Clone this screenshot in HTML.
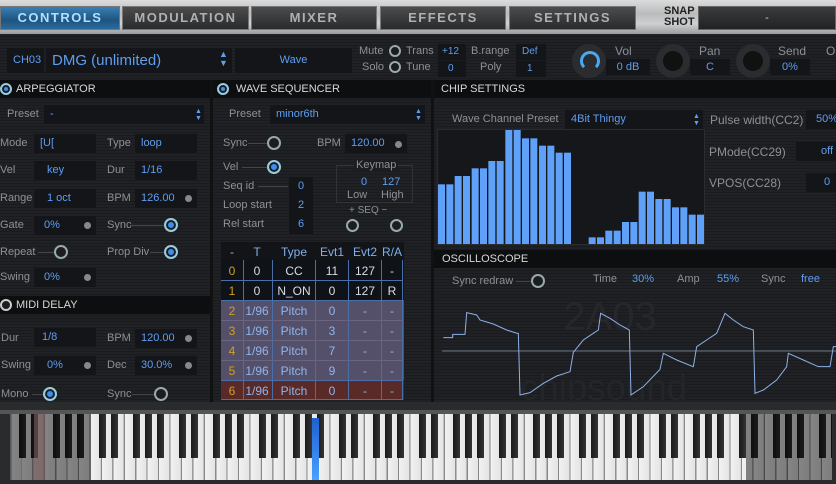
<!DOCTYPE html>
<html><head><meta charset="utf-8"><style>
*{margin:0;padding:0;box-sizing:border-box}
body{width:836px;height:484px;overflow:hidden;background:#1d1f22;font-family:"Liberation Sans",sans-serif;font-size:11px;color:#8c9197;position:relative}
.scan{left:0;top:34px;width:836px;height:376px;background:repeating-linear-gradient(#1f2124 0,#1f2124 2px,#191b1e 2px,#191b1e 3px)}
.a{position:absolute;white-space:nowrap}
.top{left:0;top:0;width:836px;height:34px;background:linear-gradient(#dcdcdc,#b9bbbd 40%,#cfd0d1 70%,#9a9c9e)}
.tab{top:6px;height:24px;background:linear-gradient(#4a4c4e,#2a2b2d);border:1px solid #777;color:#b0b0b0;font-size:13px;letter-spacing:1.5px;text-align:center;line-height:22px;font-weight:bold}
.tab.on{background:linear-gradient(#3a7fb5,#1f5480 60%,#2a6b9c);color:#aee0ff}
.hdr{height:18px;background:#0d0e10;color:#d8d8d8;font-size:11px;line-height:18px}
.bx{background:#131518;height:19px;line-height:19px;color:#5f9ef2;padding-left:6px}
.v{color:#5f9ef2}
.lb{color:#8c9197}
.kn{width:14px;height:14px;border-radius:50%;border:2px solid #9aa;background:#1b1d20}
.kn.b{border-color:#9cd;background:#3c8ff0;box-shadow:inset 0 0 0 2px #1b1d20}
.dot{width:7px;height:7px;border-radius:50%;background:#888}
.line{height:1px;background:#444}
</style></head><body>
<div class="a top"></div>
<div class="a scan"></div>
<div class="a tab on" style="left:0;width:120px">CONTROLS</div>
<div class="a tab" style="left:122px;width:127px">MODULATION</div>
<div class="a tab" style="left:251px;width:126px">MIXER</div>
<div class="a tab" style="left:380px;width:126px">EFFECTS</div>
<div class="a tab" style="left:509px;width:127px">SETTINGS</div>
<div class="a" style="left:664px;top:6px;color:#222;font-weight:bold;font-size:11px;line-height:11px;text-align:center">SNAP<br>SHOT</div>
<div class="a" style="left:698px;top:6px;width:138px;height:24px;background:linear-gradient(#3a3c3e,#222);border:1px solid #666;color:#ccc;text-align:center;line-height:22px">-</div>

<div class="a bx" style="left:7px;top:48px;width:37px;height:25px;line-height:25px;font-size:11px">CH03</div>
<div class="a bx" style="left:46px;top:48px;width:186px;height:25px;line-height:25px;font-size:15px">DMG (unlimited)</div>
<div class="a" style="left:219px;top:50px;color:#5f9ef2;font-size:9px;line-height:9px">▲<br>▼</div>
<div class="a bx" style="left:235px;top:48px;width:117px;height:25px;line-height:25px;text-align:center;padding:0">Wave</div>
<div class="a lb" style="left:359px;top:45px">Mute</div><div class="a kn" style="left:389px;top:45px;width:12px;height:12px"></div><div class="a lb" style="left:406px;top:45px">Trans</div>
<div class="a lb" style="left:362px;top:61px">Solo</div><div class="a kn" style="left:389px;top:61px;width:12px;height:12px"></div><div class="a lb" style="left:406px;top:61px">Tune</div>
<div class="a bx" style="left:438px;top:44px;width:28px;height:16px;line-height:16px;font-size:10px;padding-left:4px">+12</div>
<div class="a bx" style="left:438px;top:61px;width:28px;height:16px;line-height:16px;font-size:10px;padding-left:10px">0</div>
<div class="a lb" style="left:471px;top:45px">B.range</div><div class="a lb" style="left:480px;top:61px">Poly</div>
<div class="a bx" style="left:516px;top:44px;width:30px;height:16px;line-height:16px;font-size:10px;padding-left:6px">Def</div>
<div class="a bx" style="left:516px;top:61px;width:30px;height:16px;line-height:16px;font-size:10px;padding-left:11px">1</div>
<div class="a" style="left:572px;top:44px;width:34px;height:34px;border-radius:50%;background:#2a2c2f"></div>
<div class="a" style="left:580px;top:51px;width:20px;height:20px;border-radius:50%;border:3px solid #4aa8f0;border-bottom-color:transparent"></div>
<div class="a lb" style="left:615px;top:44px;font-size:12px">Vol</div>
<div class="a bx" style="left:606px;top:59px;width:44px;height:16px;line-height:16px;text-align:center;padding:0">0 dB</div>
<div class="a" style="left:656px;top:44px;width:34px;height:34px;border-radius:50%;background:#2a2c2f"></div>
<div class="a" style="left:663px;top:51px;width:20px;height:20px;border-radius:50%;background:#111"></div>
<div class="a lb" style="left:699px;top:44px;font-size:12px">Pan</div>
<div class="a bx" style="left:690px;top:59px;width:40px;height:16px;line-height:16px;text-align:center;padding:0">C</div>
<div class="a" style="left:736px;top:44px;width:34px;height:34px;border-radius:50%;background:#2a2c2f"></div>
<div class="a" style="left:743px;top:51px;width:20px;height:20px;border-radius:50%;background:#111"></div>
<div class="a lb" style="left:778px;top:44px;font-size:12px">Send</div>
<div class="a bx" style="left:770px;top:59px;width:40px;height:16px;line-height:16px;text-align:center;padding:0">0%</div>
<div class="a lb" style="left:826px;top:44px;font-size:12px">O</div>

<div class="a hdr" style="left:0;top:80px;width:210px;padding-left:16px">ARPEGGIATOR</div>
<div class="a kn b" style="left:0;top:83px;width:12px;height:12px"></div>
<div class="a hdr" style="left:213px;top:80px;width:219px;padding-left:23px">WAVE SEQUENCER</div>
<div class="a kn b" style="left:217px;top:83px;width:12px;height:12px"></div>
<div class="a hdr" style="left:434px;top:80px;width:402px;padding-left:7px">CHIP SETTINGS</div>
<div class="a" style="left:210px;top:80px;width:3px;height:330px;background:#111"></div>
<div class="a" style="left:431px;top:80px;width:3px;height:330px;background:#111"></div>

<div class="a lb" style="left:7px;top:108px">Preset</div>
<div class="a bx" style="left:44px;top:105px;width:160px">-</div>
<div class="a" style="left:195px;top:108px;color:#5f9ef2;font-size:7px;line-height:7px">▲<br>▼</div>
<div class="a lb" style="left:0;top:137px">Mode</div><div class="a bx" style="left:34px;top:134px;width:62px">[U[</div>
<div class="a lb" style="left:107px;top:137px">Type</div><div class="a bx" style="left:135px;top:134px;width:62px">loop</div>
<div class="a lb" style="left:0;top:164px">Vel</div><div class="a bx" style="left:34px;top:161px;width:62px;padding-left:13px">key</div>
<div class="a lb" style="left:107px;top:164px">Dur</div><div class="a bx" style="left:135px;top:161px;width:62px">1/16</div>
<div class="a lb" style="left:0;top:192px">Range</div><div class="a bx" style="left:34px;top:189px;width:62px;padding-left:13px">1 oct</div>
<div class="a lb" style="left:107px;top:192px">BPM</div><div class="a bx" style="left:135px;top:189px;width:62px">126.00</div><div class="a dot" style="left:185px;top:195px"></div>
<div class="a lb" style="left:0;top:219px">Gate</div><div class="a bx" style="left:34px;top:216px;width:62px;padding-left:10px">0%</div><div class="a dot" style="left:84px;top:222px"></div>
<div class="a lb" style="left:107px;top:219px">Sync</div><div class="a line" style="left:130px;top:225px;width:35px"></div><div class="a kn b" style="left:164px;top:218px"></div>
<div class="a lb" style="left:0;top:246px">Repeat</div><div class="a line" style="left:38px;top:252px;width:18px"></div><div class="a kn" style="left:54px;top:245px"></div>
<div class="a lb" style="left:107px;top:246px">Prop Div</div><div class="a line" style="left:150px;top:252px;width:15px"></div><div class="a kn b" style="left:164px;top:245px"></div>
<div class="a lb" style="left:0;top:271px">Swing</div><div class="a bx" style="left:34px;top:268px;width:62px;padding-left:10px">0%</div><div class="a dot" style="left:84px;top:274px"></div>
<div class="a hdr" style="left:0;top:296px;width:210px;padding-left:16px">MIDI DELAY</div>
<div class="a kn" style="left:0;top:299px;width:12px;height:12px;border-color:#ccc"></div>
<div class="a lb" style="left:1px;top:332px">Dur</div><div class="a bx" style="left:34px;top:328px;width:62px;padding-left:8px">1/8</div>
<div class="a lb" style="left:107px;top:332px">BPM</div><div class="a bx" style="left:135px;top:329px;width:62px">120.00</div><div class="a dot" style="left:185px;top:335px"></div>
<div class="a lb" style="left:1px;top:359px">Swing</div><div class="a bx" style="left:34px;top:356px;width:62px;padding-left:13px">0%</div><div class="a dot" style="left:84px;top:362px"></div>
<div class="a lb" style="left:107px;top:359px">Dec</div><div class="a bx" style="left:135px;top:356px;width:62px">30.0%</div><div class="a dot" style="left:185px;top:362px"></div>
<div class="a lb" style="left:1px;top:388px">Mono</div><div class="a line" style="left:32px;top:394px;width:12px"></div><div class="a kn b" style="left:43px;top:387px"></div>
<div class="a lb" style="left:107px;top:388px">Sync</div><div class="a line" style="left:132px;top:394px;width:22px"></div><div class="a kn" style="left:154px;top:387px"></div>

<div class="a lb" style="left:229px;top:108px">Preset</div>
<div class="a bx" style="left:270px;top:105px;width:155px">minor6th</div>
<div class="a" style="left:415px;top:108px;color:#5f9ef2;font-size:7px;line-height:7px">▲<br>▼</div>
<div class="a lb" style="left:223px;top:137px">Sync</div><div class="a line" style="left:248px;top:143px;width:20px"></div><div class="a kn" style="left:267px;top:136px"></div>
<div class="a lb" style="left:317px;top:137px">BPM</div><div class="a bx" style="left:345px;top:134px;width:62px">120.00</div><div class="a dot" style="left:395px;top:141px"></div>
<div class="a lb" style="left:223px;top:161px">Vel</div><div class="a line" style="left:242px;top:167px;width:26px"></div><div class="a kn b" style="left:267px;top:160px"></div>
<div class="a lb" style="left:223px;top:180px">Seq id</div><div class="a line" style="left:258px;top:186px;width:30px"></div><div class="a bx" style="left:289px;top:177px;width:24px;padding-left:9px">0</div>
<div class="a lb" style="left:223px;top:199px">Loop start</div><div class="a bx" style="left:289px;top:196px;width:24px;padding-left:9px">2</div>
<div class="a lb" style="left:223px;top:218px">Rel start</div><div class="a bx" style="left:289px;top:215px;width:24px;padding-left:9px">6</div>
<div class="a" style="left:336px;top:165px;width:77px;height:38px;border:1px solid #333"></div>
<div class="a lb" style="left:354px;top:159px;background:#1b1d20;padding:0 2px">Keymap</div>
<div class="a v" style="left:361px;top:176px">0</div><div class="a v" style="left:382px;top:176px">127</div>
<div class="a lb" style="left:347px;top:189px">Low</div><div class="a lb" style="left:381px;top:189px">High</div>
<div class="a lb" style="left:349px;top:205px;font-size:10px">+ SEQ −</div>
<div class="a kn" style="left:346px;top:219px;width:13px;height:13px"></div><div class="a kn" style="left:390px;top:219px;width:13px;height:13px"></div>

<svg class="a" style="left:221px;top:242px" width="183" height="160" viewBox="221 242 183 160">
<rect x="221" y="242" width="183" height="18" fill="#121417"/>
<rect x="221" y="260" width="183" height="40" fill="#0f1216"/>
<rect x="221" y="300" width="183" height="80" fill="#55506a"/>
<rect x="221" y="380" width="183" height="20" fill="#5a2a28"/>
<g stroke="#4a6fa8" stroke-width="1">
<line x1="243.5" y1="260" x2="243.5" y2="400"/><line x1="272.5" y1="260" x2="272.5" y2="400"/><line x1="315.5" y1="260" x2="315.5" y2="400"/><line x1="348.5" y1="260" x2="348.5" y2="400"/><line x1="381.5" y1="260" x2="381.5" y2="400"/><line x1="402.5" y1="260" x2="402.5" y2="400"/>
<line x1="221" y1="280.5" x2="403" y2="280.5"/><line x1="221" y1="300.5" x2="403" y2="300.5"/><line x1="221" y1="320.5" x2="403" y2="320.5" stroke="#6a6480"/><line x1="221" y1="340.5" x2="403" y2="340.5" stroke="#6a6480"/><line x1="221" y1="360.5" x2="403" y2="360.5" stroke="#6a6480"/><line x1="221" y1="380.5" x2="403" y2="380.5"/><line x1="221" y1="399.5" x2="403" y2="399.5"/>
</g>
<g font-family="Liberation Sans,sans-serif" font-size="12" text-anchor="middle" fill="#7fb0f0">
<text x="232" y="256" fill="#aaa">-</text><text x="257" y="256">T</text><text x="294" y="256">Type</text><text x="332" y="256">Evt1</text><text x="365" y="256">Evt2</text><text x="392" y="256">R/A</text>
</g>
<g font-family="Liberation Sans,sans-serif" font-size="12" text-anchor="middle" fill="#d8dce8">
<text x="232" y="275" fill="#d0a020">0</text><text x="257" y="275">0</text><text x="294" y="275">CC</text><text x="332" y="275">11</text><text x="365" y="275">127</text><text x="392" y="275">-</text>
<text x="232" y="295" fill="#d0a020">1</text><text x="257" y="295">0</text><text x="294" y="295">N_ON</text><text x="332" y="295">0</text><text x="365" y="295">127</text><text x="392" y="295">R</text>
</g>
<g font-family="Liberation Sans,sans-serif" font-size="12" text-anchor="middle" fill="#8fb4ee">
<text x="232" y="315" fill="#d0a020">2</text><text x="257" y="315">1/96</text><text x="294" y="315">Pitch</text><text x="332" y="315">0</text><text x="365" y="315">-</text><text x="392" y="315">-</text>
<text x="232" y="335" fill="#d0a020">3</text><text x="257" y="335">1/96</text><text x="294" y="335">Pitch</text><text x="332" y="335">3</text><text x="365" y="335">-</text><text x="392" y="335">-</text>
<text x="232" y="355" fill="#d0a020">4</text><text x="257" y="355">1/96</text><text x="294" y="355">Pitch</text><text x="332" y="355">7</text><text x="365" y="355">-</text><text x="392" y="355">-</text>
<text x="232" y="375" fill="#d0a020">5</text><text x="257" y="375">1/96</text><text x="294" y="375">Pitch</text><text x="332" y="375">9</text><text x="365" y="375">-</text><text x="392" y="375">-</text>
<text x="232" y="395" fill="#d0a020">6</text><text x="257" y="395">1/96</text><text x="294" y="395">Pitch</text><text x="332" y="395">0</text><text x="365" y="395">-</text><text x="392" y="395">-</text>
</g>
</svg>

<div class="a lb" style="left:452px;top:113px">Wave Channel Preset</div>
<div class="a bx" style="left:565px;top:110px;width:138px">4Bit Thingy</div>
<div class="a" style="left:693px;top:113px;color:#5f9ef2;font-size:7px;line-height:7px">▲<br>▼</div>
<div class="a" style="left:437px;top:129px;width:268px;height:116px;background:#15171a;border:1px solid #2a2c30"></div>
<div class="a lb" style="left:710px;top:113px;font-size:12px">Pulse width(CC2)</div>
<div class="a bx" style="left:806px;top:110px;width:30px;padding-left:10px">50%</div>
<div class="a lb" style="left:709px;top:145px;font-size:12px">PMode(CC29)</div>
<div class="a bx" style="left:796px;top:142px;width:40px;padding-left:25px">off</div>
<div class="a lb" style="left:709px;top:176px;font-size:12px">VPOS(CC28)</div>
<div class="a bx" style="left:806px;top:173px;width:30px;padding-left:18px">0</div>
<div class="a hdr" style="left:434px;top:250px;width:402px;padding-left:8px">OSCILLOSCOPE</div>
<div class="a lb" style="left:452px;top:275px">Sync redraw</div><div class="a line" style="left:516px;top:281px;width:16px"></div><div class="a kn" style="left:531px;top:274px"></div>
<div class="a lb" style="left:593px;top:273px">Time</div><div class="a v" style="left:632px;top:273px">30%</div>
<div class="a lb" style="left:677px;top:273px">Amp</div><div class="a v" style="left:717px;top:273px">55%</div>
<div class="a lb" style="left:761px;top:273px">Sync</div><div class="a v" style="left:801px;top:273px">free</div>

<svg class="a" style="left:430px;top:100px" width="406" height="310" viewBox="0 0 1218 930">
<g fill="#5fa0f8">
<rect x="24" y="253" width="21" height="179"/><rect x="49" y="253" width="21" height="179"/><rect x="74" y="228" width="21" height="204"/><rect x="99" y="228" width="21" height="204"/><rect x="125" y="205" width="21" height="227"/><rect x="150" y="205" width="21" height="227"/><rect x="175" y="183" width="21" height="249"/><rect x="200" y="183" width="21" height="249"/><rect x="226" y="90" width="21" height="342"/><rect x="251" y="90" width="21" height="342"/><rect x="276" y="115" width="21" height="317"/><rect x="301" y="115" width="21" height="317"/><rect x="327" y="137" width="21" height="295"/><rect x="352" y="137" width="21" height="295"/><rect x="377" y="158" width="21" height="274"/><rect x="402" y="158" width="21" height="274"/>
<rect x="476" y="412" width="21" height="20"/><rect x="501" y="412" width="21" height="20"/><rect x="526" y="392" width="21" height="40"/><rect x="551" y="392" width="21" height="40"/><rect x="576" y="366" width="21" height="66"/><rect x="601" y="366" width="21" height="66"/><rect x="626" y="275" width="21" height="157"/><rect x="651" y="275" width="21" height="157"/><rect x="676" y="297" width="21" height="135"/><rect x="701" y="297" width="21" height="135"/><rect x="726" y="322" width="21" height="110"/><rect x="751" y="322" width="21" height="110"/><rect x="776" y="344" width="21" height="88"/><rect x="801" y="344" width="21" height="88"/>
</g>
<line x1="36" y1="753" x2="1218" y2="753" stroke="#8a9aac" stroke-width="2"/>
<text x="400" y="690" font-family="Liberation Sans,sans-serif" font-size="120" fill="#25272a">2A03</text>
<text x="270" y="900" font-family="Liberation Sans,sans-serif" font-size="110" fill="#232528">chipsound</text>
<polyline fill="none" stroke="#8fb0e8" stroke-width="3" points="40,713 68,713 68,703 105,703 110,638 140,645 150,660 190,672 230,690 262,700 265,700 270,885 300,878 340,850 380,828 420,815 430,757 460,720 490,700 505,690 512,640 540,655 570,675 598,690 603,885 640,860 690,808 700,760 740,780 790,800 800,740 830,720 860,700 885,640 910,660 940,680 970,690 975,880 1000,870 1040,840 1070,800 1075,760 1120,780 1165,800 1200,800 1210,740 1218,740"/>
</svg>

<div class="a" style="left:0;top:402px;width:836px;height:82px;background:#2a2b2d"></div>
<div class="a" style="left:0;top:410px;width:836px;height:4px;background:#555"></div>
<div class="a" style="left:10px;top:414px;width:822px;height:66px;background:repeating-linear-gradient(to right,#f2f2f2 0,#e4e4e4 10px,#888 10.4px,#888 11.43px);background-position:12px 0"></div>
<div class="a" style="left:10px;top:414px;width:822px;height:44px;background:linear-gradient(to right,transparent 7px,#1a1a1a 7px,#333 14px,transparent 14px,transparent 19px,#1a1a1a 19px,#333 26px,transparent 26px,transparent 41px,#1a1a1a 41px,#333 48px,transparent 48px,transparent 53px,#1a1a1a 53px,#333 60px,transparent 60px,transparent 65px,#1a1a1a 65px,#333 72px,transparent 72px);background-size:80px 44px;background-position:2px 0"></div>
<div class="a" style="left:34px;top:414px;width:11px;height:66px;background:rgba(230,170,170,.6)"></div>
<div class="a" style="left:10px;top:414px;width:81px;height:66px;background:rgba(0,0,0,.45)"></div>
<div class="a" style="left:746px;top:414px;width:86px;height:66px;background:rgba(0,0,0,.45)"></div>
<div class="a" style="left:312px;top:418px;width:7px;height:62px;background:linear-gradient(#1f5fd0,#4aa0ff)"></div>
</body></html>
